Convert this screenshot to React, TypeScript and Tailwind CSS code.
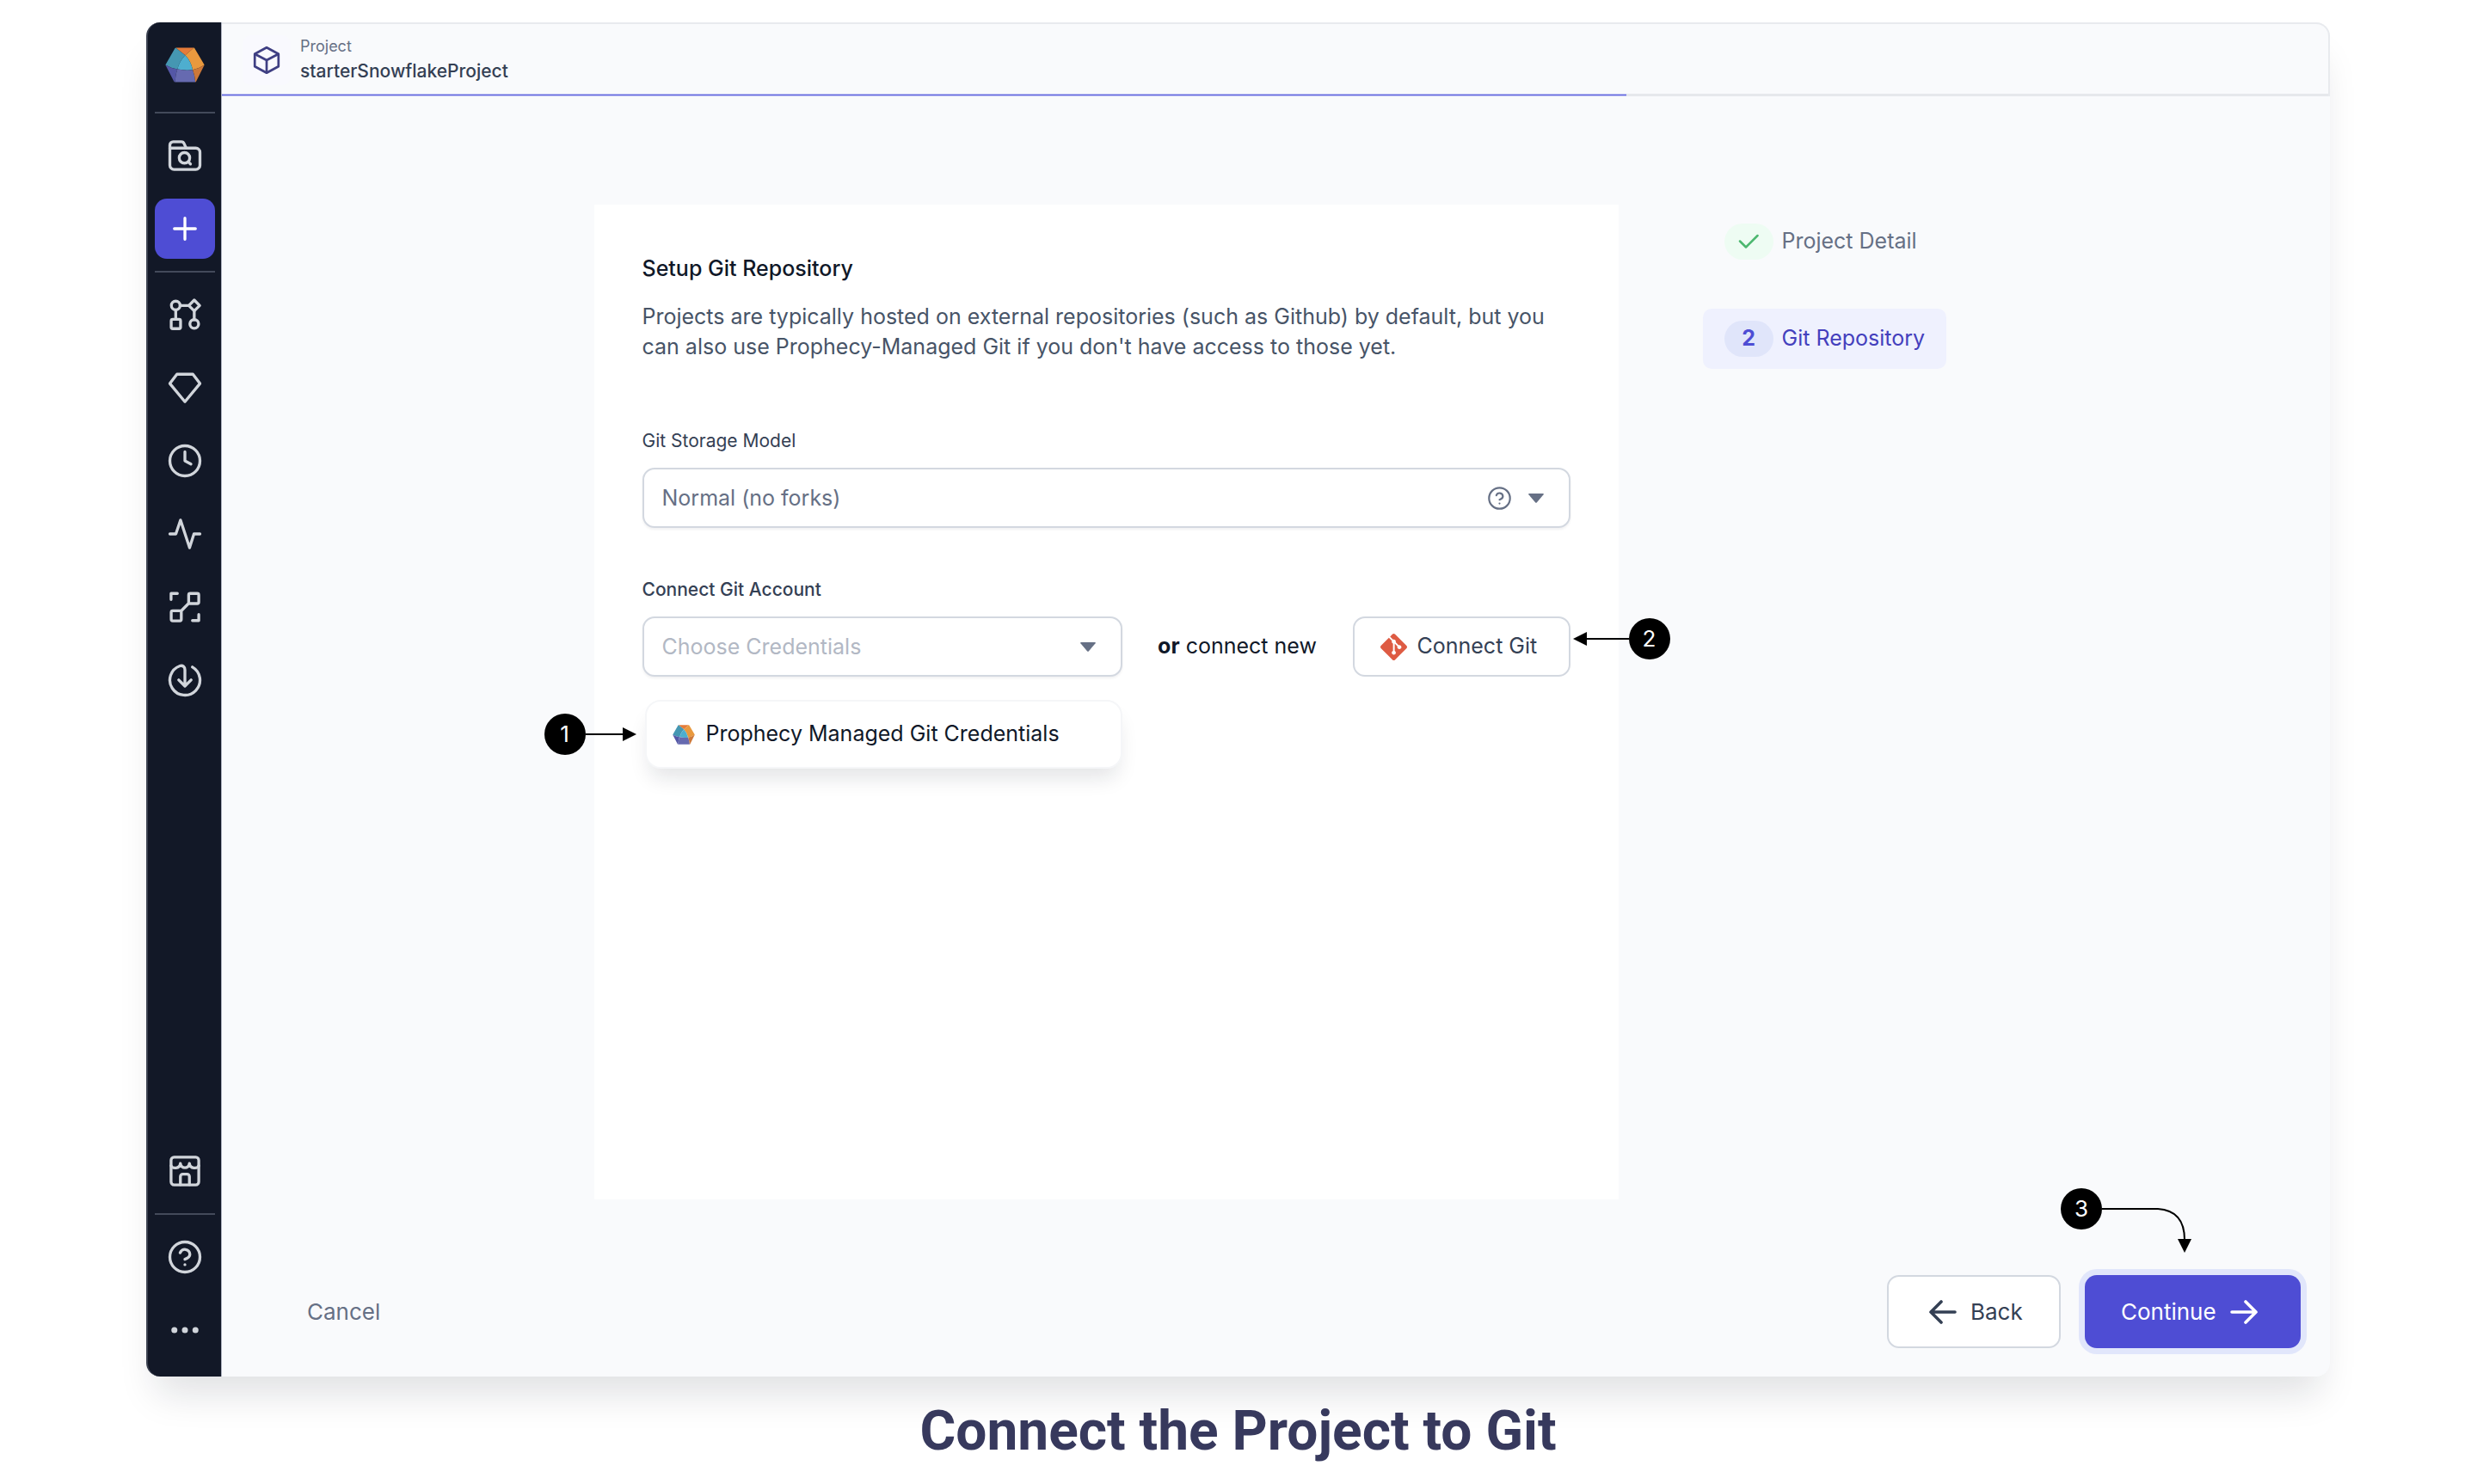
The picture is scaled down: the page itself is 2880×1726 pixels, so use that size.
import type { ReactNode } from "react";
import { SiGit } from "react-icons/si";

function Logo({ className }: { className: string }) {
  return (
    <svg viewBox="4 46 136 120" className={className} aria-hidden="true">
      <path d="M40 47H103L73 73Z" fill="#e57b39" />
      <path d="M5 106L38 48Q40 47 42 48L73 73Q54 92 46 121Q24 117 5 106Z" fill="#4597b2" />
      <path d="M73 73L101 48Q103 46 105 48L139 106Q122 118 99 123Q92 92 73 73Z" fill="#e9993e" />
      <path d="M73 73Q54 92 46 121Q73 126 99 123Q92 92 73 73Z" fill="#4eaecf" />
      <path d="M5 106Q24 117 46 121Q39 140 38 165Q35 165 34 162Z" fill="#5457a6" />
      <path d="M46 121Q73 126 99 123Q106 142 108 165H38Q39 140 46 121Z" fill="#666ab0" />
      <path d="M99 123Q122 118 139 106L111 162Q110 165 108 165Q106 142 99 123Z" fill="#cd7839" />
    </svg>
  );
}

function NavIcon({ children }: { children: ReactNode }) {
  return (
    <svg
      viewBox="0 0 24 24"
      className="size-[42px]"
      fill="none"
      stroke="currentColor"
      strokeWidth="1.9"
      strokeLinecap="round"
      strokeLinejoin="round"
      aria-hidden="true"
    >
      {children}
    </svg>
  );
}

function NavButton({ label, children }: { label: string; children: ReactNode }) {
  return (
    <button
      type="button"
      aria-label={label}
      className="flex size-[70px] items-center justify-center rounded-[14px] text-[#d1d5db]"
    >
      <NavIcon>{children}</NavIcon>
    </button>
  );
}

function Divider() {
  return <div className="my-[14px] h-0.5 w-[70px] shrink-0 bg-[#434a5a]" />;
}

function Sidebar() {
  return (
    <nav
      aria-label="Main"
      className="flex w-[88px] shrink-0 flex-col items-center rounded-l-[16px] border-r border-l-2 border-r-[#aeb3c0] border-l-[#3b4150] bg-[#121827] pt-2 pb-[19px]"
    >
      <a href="#home" aria-label="Home" className="flex h-[82px] items-center">
        <Logo className="h-[41px] w-[46px]" />
      </a>
      <Divider />
      <div className="flex flex-col gap-[15px]">
        <NavButton label="Browse projects">
          <path d="M2 7V5a2.200 2.200 0 0 1 2.200-2.200H9.600A2 2 0 0 1 11.500 4.100L12.800 7" />
          <path d="M2 7H19.200A2.800 2.800 0 0 1 22 9.800V18.400A2.800 2.800 0 0 1 19.200 21.200H4.800A2.800 2.800 0 0 1 2 18.400Z" />
          <circle cx="11.700" cy="13.500" r="3.500" />
          <path d="M14.300 16.200L15.700 17.600" />
        </NavButton>
        <button
          type="button"
          aria-label="Create"
          className="flex size-[70px] items-center justify-center rounded-[14px] bg-[#4e4dd4] text-white"
        >
          <NavIcon>
            <path d="M12 5V19M5 12H19" />
          </NavIcon>
        </button>
      </div>
      <Divider />
      <div className="flex flex-col gap-[15px]">
        <NavButton label="Pipelines">
          <circle cx="5.900" cy="5.900" r="2.900" />
          <path d="M18.200 2.300L21.800 5.900L18.200 9.500L14.600 5.900Z" />
          <rect x="2.900" y="15.100" width="6.200" height="6.200" rx="1" />
          <circle cx="18.200" cy="18.200" r="2.900" />
          <path d="M8.800 5.900H14.600M5.900 8.800V15.100M18.200 9.500V15.300" />
        </NavButton>
        <NavButton label="Gems">
          <path d="M6.700 3H17.300L22 9.200L12 21.300L2 9.200Z" />
        </NavButton>
        <NavButton label="Schedules">
          <circle cx="12" cy="12" r="10" />
          <path d="M12 6V12L16 14.100" />
        </NavButton>
        <NavButton label="Activity">
          <path d="M2 12H6L9.100 2.800L15.100 21.200L18 12H22" />
        </NavButton>
        <NavButton label="Lineage">
          <rect x="14.500" y="3" width="6.700" height="6.700" rx="1" />
          <rect x="2.900" y="14.500" width="6.700" height="6.700" rx="1" />
          <path d="M9.700 14.400L14.500 9.600M2.800 7V3H7M21.200 17V21H17" />
        </NavButton>
        <NavButton label="Downloads">
          <path d="M17 3.340A10 10 0 1 1 8.700 2.560C10.600 2 12 3.200 12 5.200V16M7.900 11.900L12 16L16.100 11.900" />
        </NavButton>
      </div>
      <div className="mt-auto flex flex-col">
        <NavButton label="Marketplace">
          <rect x="2.800" y="2.800" width="18.400" height="18.400" rx="2" />
          <path d="M2.800 8.400C3.600 10.600 8.600 10.700 9 7C9.400 10.700 14.600 10.700 15 7C15.400 10.700 20.400 10.600 21.200 8.400" />
          <path d="M9 21V15.700A1.600 1.600 0 0 1 10.600 14.100H13.400A1.600 1.600 0 0 1 15 15.700V21" />
        </NavButton>
        <Divider />
        <div className="flex flex-col gap-[15px]">
          <NavButton label="Help">
            <circle cx="12" cy="12" r="10" />
            <path d="M8.800 9.200A3.350 3.350 0 0 1 15.300 10.200C15.300 12.400 12 13.500 12 13.500M12 17.100V17.120" />
          </NavButton>
          <NavButton label="More">
            <g fill="currentColor" stroke="none">
              <circle cx="5" cy="12" r="2" />
              <circle cx="12" cy="12" r="2" />
              <circle cx="19" cy="12" r="2" />
            </g>
          </NavButton>
        </div>
      </div>
    </nav>
  );
}

function Caret() {
  return (
    <svg viewBox="0 0 18 11" className="h-[11px] w-[18px] shrink-0" aria-hidden="true">
      <path d="M1 0H17Q18.500 0 17.600 1.200L10 10.200Q9 11.200 8 10.200L0.400 1.200Q-0.500 0 1 0Z" fill="#667085" />
    </svg>
  );
}

function Badge({ children }: { children: ReactNode }) {
  return (
    <span className="flex size-12 shrink-0 items-center justify-center rounded-full bg-black text-[26px] leading-none text-white">
      {children}
    </span>
  );
}

function Header() {
  return (
    <header className="rounded-tr-[16px] border-t-2 border-r-2 border-[#e8eaee]">
      <div className="flex h-[81px] items-center gap-[11px] pt-0.5 pl-6">
        <div className="flex h-[58px] w-[56px] items-center justify-center rounded-[10px] bg-[#f9f9fe]">
          <svg
            viewBox="0 0 24 24"
            className="size-9"
            fill="none"
            stroke="#3f3f83"
            strokeWidth="1.800"
            strokeLinejoin="round"
            aria-hidden="true"
          >
            <path d="M12 2.200L21.200 7.200V16.800L12 21.800L2.800 16.800V7.200Z" />
            <path d="M2.800 7.200L12 12L21.200 7.200M12 12V21.800" />
          </svg>
        </div>
        <div className="pb-0.5">
          <p className="text-[18px] leading-[28px] text-[#667085]">Project</p>
          <p className="text-[21px] leading-[30px] font-medium text-[#344054]">starterSnowflakeProject</p>
        </div>
      </div>
      <div className="h-[3px] bg-[#e6e8ec]">
        <div className="h-[3px] w-2/3 border-y border-[#b9bcf1] bg-[#6468de]" />
      </div>
    </header>
  );
}

const fieldBox =
  "flex h-[70px] items-center rounded-[14px] border-2 border-[#d3d8e0] bg-white pr-[29px] pl-[21px] shadow-[0_2px_3px_rgba(16,24,40,0.06)]";
const selectBase = "h-full min-w-0 flex-1 appearance-none bg-transparent pt-0.5 text-[25px] outline-none";

function SetupCard() {
  return (
    <section className="w-full max-w-[1191px] bg-white px-14 pt-[57px]">
      <h1 className="text-[25px] leading-[35px] font-medium text-[#101828]">Setup Git Repository</h1>
      <p className="mt-[21px] text-[25px] leading-[35px] text-[#475467]">
        Projects are typically hosted on external repositories (such as Github) by default, but you can also use
        Prophecy-Managed Git if you don't have access to those yet.
      </p>

      <label htmlFor="storage" className="mt-[77px] block text-[21px] leading-[30px] text-[#344054]">
        Git Storage Model
      </label>
      <div className={fieldBox + " mt-4 gap-5"}>
        <select id="storage" className={selectBase + " text-[#667085]"}>
          <option>Normal (no forks)</option>
        </select>
        <svg
          viewBox="0 0 27 27"
          className="size-[27px] shrink-0"
          fill="none"
          stroke="#667085"
          strokeWidth="2.200"
          strokeLinecap="round"
          strokeLinejoin="round"
          aria-hidden="true"
        >
          <circle cx="13.500" cy="13.500" r="12.200" />
          <path d="M9.800 10.200A3.900 3.900 0 0 1 17.400 11.300C17.400 13.900 13.500 15.200 13.500 15.200M13.500 19.600V19.620" />
        </svg>
        <Caret />
      </div>

      <label htmlFor="credentials" className="mt-[57px] block text-[21px] leading-[30px] font-medium text-[#344054]">
        Connect Git Account
      </label>
      <div className="mt-4 flex items-center justify-between">
        <div className="relative w-[558px]">
          <div className={fieldBox}>
            <select id="credentials" className={selectBase + " text-[#b2b8c4]"}>
              <option>Choose Credentials</option>
            </select>
            <Caret />
          </div>
          <div className="absolute top-[97px] right-0 left-[3px]">
            <button
              type="button"
              className="flex h-20 w-full items-center gap-[13px] rounded-[18px] border-2 border-[#f5f6f8] bg-white pl-[30px] text-[25px] text-[#101828] shadow-[0_16px_24px_-6px_rgba(16,24,40,0.12)]"
            >
              <Logo className="h-[23px] w-[26px]" />
              Prophecy Managed Git Credentials
            </button>
            <div className="absolute top-4 right-full mr-[10px] flex items-center">
              <Badge>1</Badge>
              <svg viewBox="0 0 59 16" className="h-4 w-[59px]" aria-hidden="true">
                <path d="M0 7H43V0L59 8L43 16V9H0Z" />
              </svg>
            </div>
          </div>
        </div>
        <p className="text-[25px] text-[#101828]">
          <b>or</b> connect new
        </p>
        <div className="relative">
          <button
            type="button"
            className="flex h-[70px] w-[253px] items-center gap-3 rounded-[14px] border-2 border-[#d3d8e0] bg-white pl-[30px] text-[25px] text-[#344054]"
          >
            <SiGit className="size-[31px] text-[#de5b43]" aria-hidden="true" />
            Connect Git
          </button>
          <div className="absolute top-0.5 left-full ml-[3px] flex items-center">
            <svg viewBox="0 0 65 16" className="h-4 w-[65px]" aria-hidden="true">
              <path d="M65 7H16V0L0 8L16 16V9H65Z" />
            </svg>
            <Badge>2</Badge>
          </div>
        </div>
      </div>
    </section>
  );
}

function Steps() {
  return (
    <ol className="flex w-[297px] shrink-0 flex-col items-start gap-[43px] pt-2 text-[25px]">
      <li className="flex h-[70px] items-center gap-[10px] rounded-[10px] px-[25px] text-[#667085]">
        <span className="flex h-[42px] w-[57px] items-center justify-center rounded-[21px] bg-[#eefcf3]">
          <svg viewBox="0 0 24 18" className="h-[18px] w-6" fill="none" stroke="#4cb76f" strokeWidth="2.500" aria-label="Done">
            <path d="M2 8.500L9 15.500L22.500 2" strokeLinecap="round" strokeLinejoin="round" />
          </svg>
        </span>
        Project Detail
      </li>
      <li
        aria-current="step"
        className="flex h-[70px] items-center gap-[10px] rounded-[10px] bg-[#eff1fe] px-[25px] text-[#4440bd]"
      >
        <span className="flex h-[42px] w-[57px] items-center justify-center rounded-[21px] bg-[#e0e5fa] font-bold text-[#4e4dd4]">
          2
        </span>
        Git Repository
      </li>
    </ol>
  );
}

function Footer() {
  return (
    <footer className="flex items-center justify-between pt-[88px] pr-[34px] pb-[33px] pl-[99px] text-[26px]">
      <button type="button" className="text-[#667085]">
        Cancel
      </button>
      <div className="flex gap-7">
        <button
          type="button"
          className="flex h-[85px] w-[202px] items-center gap-4 rounded-[14px] border-2 border-[#d3d8e0] bg-white pl-[47px] text-[#344054]"
        >
          <svg viewBox="0 0 32 28" className="h-7 w-8" fill="none" stroke="currentColor" strokeWidth="3.600" strokeLinecap="round" strokeLinejoin="round" aria-hidden="true">
            <path d="M30 14H2M14 2L2 14L14 26" />
          </svg>
          Back
        </button>
        <div className="relative">
          <button
            type="button"
            className="flex h-[85px] w-[251px] items-center gap-4 rounded-[14px] bg-[#4e4dd4] pl-[42px] text-white shadow-[0_0_0_7px_#e1e6fb]"
          >
            Continue
            <svg viewBox="0 0 32 28" className="h-7 w-8" fill="none" stroke="currentColor" strokeWidth="3.600" strokeLinecap="round" strokeLinejoin="round" aria-hidden="true">
              <path d="M2 14H30M18 2L30 14L18 26" />
            </svg>
          </button>
          <div className="absolute right-[127px] bottom-full mb-[26px] flex items-start">
            <Badge>3</Badge>
            <svg viewBox="0 0 104 75" className="h-[75px] w-[104px]" aria-hidden="true">
              <path d="M0 24H65Q96 26 96 60" fill="none" stroke="black" strokeWidth="2" />
              <path d="M88 59H104L96 75Z" />
            </svg>
          </div>
        </div>
      </div>
    </footer>
  );
}

export default function App() {
  return (
    <div className="flex min-h-screen flex-col bg-white pt-[26px] pr-[171px] pl-[170px] font-['Inter',sans-serif]">
      <div className="flex flex-1 rounded-[16px] bg-[#f9fafc] shadow-[0_32px_44px_-12px_rgba(16,24,40,0.13)]">
        <Sidebar />
        <div className="flex min-w-0 flex-1 flex-col">
          <Header />
          <main className="flex flex-1 justify-center gap-[98px] pt-[126px]">
            <SetupCard />
            <Steps />
          </main>
          <Footer />
        </div>
      </div>
      <p className="flex h-[125px] items-center justify-center pt-0.5 font-['Roboto',sans-serif] text-[64px] leading-none font-bold text-[#37395d]">
        Connect the Project to Git
      </p>
    </div>
  );
}
